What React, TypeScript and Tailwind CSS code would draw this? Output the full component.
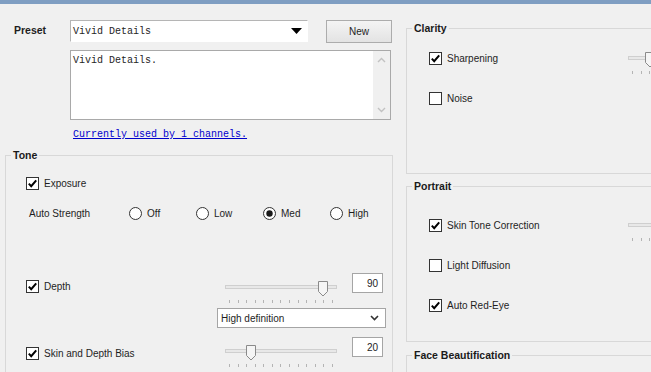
import React from 'react';

const mono = "font-['Liberation_Mono','DejaVu_Sans_Mono',monospace]";

const CheckBox = ({ checked }: { checked: boolean }) => (
  <svg width="13" height="13" viewBox="0 0 13 13" className="shrink-0">
    <rect x="0.5" y="0.5" width="12" height="12" fill="#ffffff" stroke="#333333" />
    {checked && (
      <path d="M2.8 6.6 L5.2 9.2 L10.2 3.4" fill="none" stroke="#000000" strokeWidth="2" />
    )}
  </svg>
);

const Radio = ({ checked }: { checked: boolean }) => (
  <svg width="13" height="13" viewBox="0 0 13 13" className="shrink-0">
    <circle cx="6.5" cy="6.5" r="6" fill="#ffffff" stroke="#333333" />
    {checked && <circle cx="6.5" cy="6.5" r="3.2" fill="#1a1a1a" />}
  </svg>
);

const CheckRow = ({ checked, label }: { checked: boolean; label: string }) => (
  <div className="flex items-center h-[13px]">
    <CheckBox checked={checked} />
    <span className="ml-[5px] leading-[13px]">{label}</span>
  </div>
);

const Slider = ({ thumb }: { thumb: number }) => (
  <div className="relative w-[112px] h-[13px] shrink-0">
    <div className="absolute left-0 right-0 top-[4px] h-[4px] border border-[#cfcfcf] bg-[#e8e8e8]" />
    <svg
      width="10"
      height="16"
      viewBox="0 0 10 16"
      className="absolute top-0"
      style={{ left: thumb }}
    >
      <path d="M0.5 0.5 H9.5 V10.5 L5 15 L0.5 10.5 Z" fill="#f5f5f5" stroke="#8a8a8a" />
    </svg>
    <div className="absolute left-[4px] right-[4px] top-[19px] flex justify-between">
      {Array.from({ length: 13 }).map((_, i) => (
        <div key={i} className="w-px h-[3px] bg-[#b4b4b4]" />
      ))}
    </div>
  </div>
);

const NumBox = ({ value }: { value: number }) => (
  <div className="w-[31px] h-[20px] border border-[#a5a5a5] bg-white flex items-center justify-end pr-[4px] shrink-0">
    {value}
  </div>
);

const Legend = ({ children }: { children: React.ReactNode }) => (
  <legend className="ml-[5px] px-[2px] font-bold text-[10.5px] leading-[14px] text-[#1a1a1a]">
    {children}
  </legend>
);

export default function App() {
  return (
    <div className="w-[651px] h-[372px] overflow-hidden bg-[#f0f0f0] text-[10px] text-[#1e1e1e] font-['Liberation_Sans',Arial,sans-serif]">
      <div className="h-[4px] bg-[#7f9ec2]" />
      <div className="flex">
        {/* Left column */}
        <div className="w-[406px] shrink-0">
          <div className="flex items-start mt-[16px] pl-[14px]">
            <div className="w-[56px] h-[22px] flex items-center font-bold text-[10.5px]">Preset</div>
            <div className="w-[238px] h-[22px] bg-white border border-[#b5b5b5] border-r-white border-b-white flex items-center justify-between pl-[2px] pr-[5px]">
              <span className={`${mono} text-[10px]`}>Vivid Details</span>
              <svg width="11" height="6" viewBox="0 0 11 6">
                <path d="M0 0 H11 L5.5 6 Z" fill="#000000" />
              </svg>
            </div>
            <div className="ml-[18px] w-[66px] h-[23px] border border-[#acacac] bg-gradient-to-b from-[#f4f4f4] to-[#e3e3e3] flex items-center justify-center">
              New
            </div>
          </div>

          <div className="ml-[70px] mt-[7px] w-[321px] h-[70px] bg-white border border-[#a9a9a9] flex">
            <div className={`flex-1 pl-[2px] pt-[3px] leading-[14px] ${mono}`}>Vivid Details.</div>
            <div className="w-[17px] bg-[#f0f0f0] flex flex-col items-center justify-between py-[6px]">
              <svg width="9" height="6" viewBox="0 0 9 6">
                <path d="M1 5 L4.5 1.5 L8 5" fill="none" stroke="#c2c2c2" strokeWidth="1.4" />
              </svg>
              <svg width="9" height="6" viewBox="0 0 9 6">
                <path d="M1 1 L4.5 4.5 L8 1" fill="none" stroke="#c2c2c2" strokeWidth="1.4" />
              </svg>
            </div>
          </div>

          <div className={`ml-[73px] mt-[8px] leading-[14px] text-[#0000cc] underline ${mono}`}>
            Currently used by 1 channels.
          </div>

          <fieldset className="ml-[5px] mt-[6px] w-[388px] min-w-0 border border-[#d8d8d8] pb-[20px]">
            <Legend>Tone</Legend>
            <div className="pl-[20px] mt-[15px]">
              <CheckRow checked label="Exposure" />
            </div>
            <div className="flex items-center h-[13px] mt-[17px] pl-[23px]">
              <div className="w-[100px]">Auto Strength</div>
              {['Off', 'Low', 'Med'].map((o) => (
                <div key={o} className="w-[67px] flex items-center">
                  <Radio checked={o === 'Med'} />
                  <span className="ml-[5px]">{o}</span>
                </div>
              ))}
              <div className="flex items-center">
                <Radio checked={false} />
                <span className="ml-[5px]">High</span>
              </div>
            </div>

            <div className="flex items-start h-[20px] mt-[53px] pl-[20px]">
              <div className="w-[199px] mt-[7px]">
                <CheckRow checked label="Depth" />
              </div>
              <div className="mt-[8px]">
                <Slider thumb={93} />
              </div>
              <div className="ml-[15px]">
                <NumBox value={90} />
              </div>
            </div>

            <div className="mt-[15px] ml-[211px] w-[169px] h-[20px] bg-white border border-[#a5a5a5] flex items-center justify-between pl-[3px] pr-[6px]">
              <span>High definition</span>
              <svg width="9" height="6" viewBox="0 0 9 6">
                <path d="M1 1 L4.5 4.5 L8 1" fill="none" stroke="#333333" strokeWidth="1.6" />
              </svg>
            </div>

            <div className="flex items-start h-[20px] mt-[9px] pl-[20px]">
              <div className="w-[199px] mt-[10px]">
                <CheckRow checked label="Skin and Depth Bias" />
              </div>
              <div className="mt-[8px]">
                <Slider thumb={21} />
              </div>
              <div className="ml-[15px]">
                <NumBox value={20} />
              </div>
            </div>
          </fieldset>
        </div>

        {/* Right column */}
        <div className="flex-1 overflow-hidden">
          <fieldset className="mt-[17px] w-[270px] h-[153px] border border-[#d8d8d8]">
            <Legend>Clarity</Legend>
            <div className="flex items-start mt-[17px] pl-[22px]">
              <div className="w-[199px]">
                <CheckRow checked label="Sharpening" />
              </div>
              <Slider thumb={17} />
            </div>
            <div className="mt-[27px] pl-[22px]">
              <CheckRow checked={false} label="Noise" />
            </div>
          </fieldset>

          <fieldset className="mt-[5px] w-[270px] h-[163px] border border-[#d8d8d8]">
            <Legend>Portrait</Legend>
            <div className="flex items-start mt-[26px] pl-[22px]">
              <div className="w-[199px]">
                <CheckRow checked label="Skin Tone Correction" />
              </div>
              <Slider thumb={60} />
            </div>
            <div className="mt-[27px] pl-[22px]">
              <CheckRow checked={false} label="Light Diffusion" />
            </div>
            <div className="mt-[27px] pl-[22px]">
              <CheckRow checked label="Auto Red-Eye" />
            </div>
          </fieldset>

          <fieldset className="mt-[6px] w-[270px] h-[60px] border border-[#d8d8d8]">
            <Legend>Face Beautification</Legend>
          </fieldset>
        </div>
      </div>
    </div>
  );
}
